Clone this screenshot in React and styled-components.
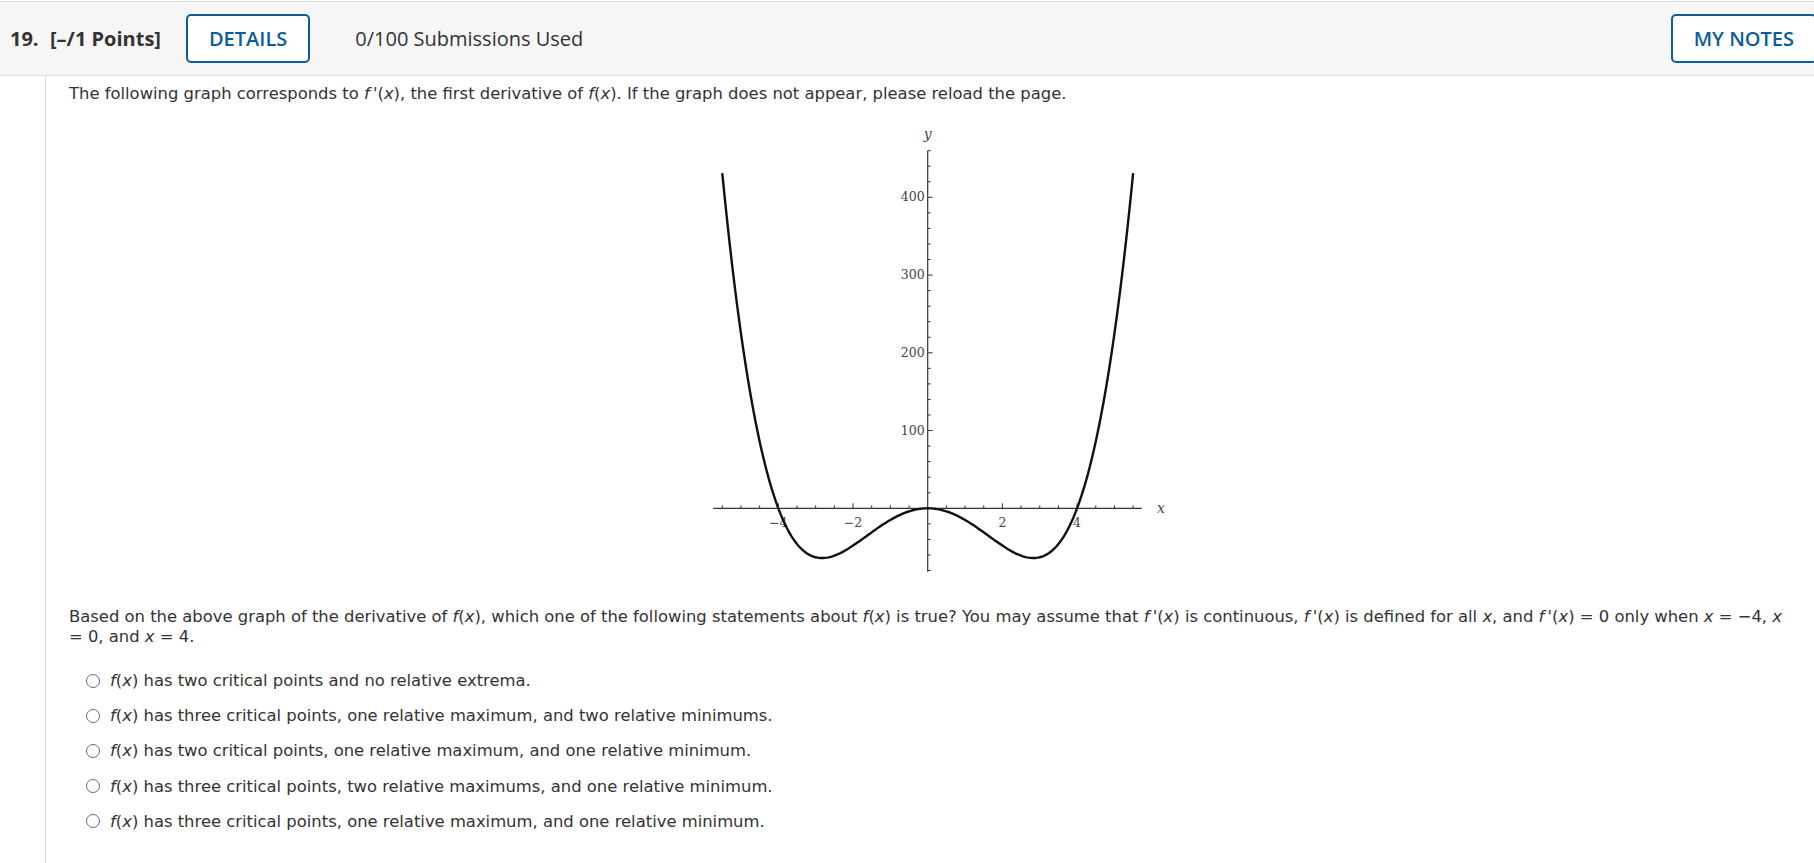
import React from 'react';
import styled, { createGlobalStyle } from 'styled-components';

const GlobalStyle = createGlobalStyle`
  html, body {
    margin: 0;
    padding: 0;
    background: #fff;
  }
  body {
    font-family: "DejaVu Sans", Verdana, sans-serif;
    color: #333;
    overflow: hidden;
  }
`;

const Header = styled.div`
  margin-top: 1px;
  height: 73px;
  display: flex;
  align-items: center;
  padding-left: 10px;
  background: #f6f6f6;
  border-top: 1px solid #dedede;
  border-bottom: 1px solid #dedede;
  font-family: "Open Sans", "Liberation Sans", sans-serif;
  overflow: hidden;
`;

const Number = styled.span`
  font-size: 20px;
  font-weight: 700;
  color: #333;
  width: 40px;
`;

const Points = styled.span`
  font-size: 20px;
  font-weight: 700;
  color: #333;
  margin-right: 25px;
`;

const OutlineButton = styled.button`
  height: 49px;
  padding: 0 21px;
  background: #fff;
  border: 2px solid #0b5e9b;
  border-radius: 5px;
  color: #0b5e9b;
  font-family: "Open Sans", "Liberation Sans", sans-serif;
  font-size: 20px;
  font-weight: 600;
  cursor: pointer;
  margin-right: ${p => (p.$edge ? '-3px' : '0')};
  margin-left: ${p => (p.$edge ? 'auto' : '0')};
`;

const Submissions = styled.span`
  font-size: 20px;
  color: #333;
  margin-left: 45px;
`;

const Body = styled.div`
  margin-left: 45px;
  border-left: 1px solid #dcdcdc;
  padding: 8px 23px 60px 23px;
  min-height: 760px;
  font-size: 16.4px;
  line-height: 20px;
`;

const Para = styled.p`
  margin: 0;
`;

const GraphWrap = styled.div`
  display: flex;
  justify-content: center;
  margin: 6px 0 17px 0;
`;

const Options = styled.div`
  display: flex;
  flex-direction: column;
  gap: 14.2px;
  margin-top: 23px;
  padding-left: 17px;
  line-height: 21px;
`;

const Option = styled.label`
  display: flex;
  align-items: center;
  gap: 10px;
  cursor: pointer;
`;

const Radio = styled.span`
  width: 12px;
  height: 12px;
  border: 1px solid #6b6b6b;
  border-radius: 50%;
  background: #fff;
  flex: none;
`;

const Fx = () => (
  <>
    <i>f</i>(<i>x</i>)
  </>
);

const Fp = () => (
  <>
    <i>f</i>&thinsp;'(<i>x</i>)
  </>
);

const OX = 237.7;
const OY = 398.3;
const SX = 37.35;
const SY = 0.7775;
const px = x => OX + SX * x;
const py = y => OY - SY * y;

function Graph() {
  const pts = [];
  for (let i = 0; i <= 220; i++) {
    const x = -5.5 + i * 0.05;
    const y = x ** 4 - 16 * x ** 2;
    pts.push(`${px(x).toFixed(2)},${py(y).toFixed(2)}`);
  }
  const xTicks = [];
  for (let i = -11; i <= 11; i++) {
    if (i === 0) continue;
    const major = i % 4 === 0;
    xTicks.push(
      <line key={'x' + i} x1={px(i / 2)} x2={px(i / 2)} y1={OY} y2={OY - (major ? 5 : 3)} stroke="#333" strokeWidth="1" />
    );
  }
  const yTicks = [];
  for (let v = -80; v <= 460; v += 20) {
    if (v === 0) continue;
    const major = v % 100 === 0;
    yTicks.push(
      <line key={'y' + v} x1={OX} x2={OX + (major ? 5 : 3)} y1={py(v)} y2={py(v)} stroke="#333" strokeWidth="1" />
    );
  }
  const lbl = { fontFamily: '"DejaVu Serif", "Liberation Serif", serif', fontSize: 12.5, fill: '#444' };
  return (
    <svg width="480" height="480" viewBox="0 0 480 480">
      <line x1="23.3" x2="451.7" y1={OY} y2={OY} stroke="#333" strokeWidth="1.2" />
      <line x1={OX} x2={OX} y1="40.7" y2="461.7" stroke="#333" strokeWidth="1.2" />
      {xTicks}
      {yTicks}
      {[-4, -2, 2, 4].map(v => (
        <text key={v} x={px(v)} y={OY + 19} textAnchor="middle" {...lbl}>
          {v < 0 ? '\u2212' + -v : v}
        </text>
      ))}
      {[100, 200, 300, 400].map(v => (
        <text key={v} x={OX - 3} y={py(v) + 4} textAnchor="end" {...lbl}>
          {v}
        </text>
      ))}
      <text x="467" y={OY + 5} {...lbl} fontSize="14" fontStyle="italic">x</text>
      <text x={OX - 4} y="29" {...lbl} fontSize="14" fontStyle="italic">y</text>
      <polyline points={pts.join(' ')} fill="none" stroke="#111" strokeWidth="2.4" strokeLinejoin="round" />
    </svg>
  );
}

const choices = [
  'has two critical points and no relative extrema.',
  'has three critical points, one relative maximum, and two relative minimums.',
  'has two critical points, one relative maximum, and one relative minimum.',
  'has three critical points, two relative maximums, and one relative minimum.',
  'has three critical points, one relative maximum, and one relative minimum.',
];

export default function App() {
  return (
    <>
      <GlobalStyle />
      <Header>
        <Number>19.</Number>
        <Points>[–/1 Points]</Points>
        <OutlineButton>DETAILS</OutlineButton>
        <Submissions>0/100 Submissions Used</Submissions>
        <OutlineButton $edge>MY NOTES</OutlineButton>
      </Header>
      <Body>
        <Para>
          The following graph corresponds to <Fp />, the first derivative of <Fx />. If the graph does not appear, please reload the page.
        </Para>
        <GraphWrap>
          <Graph />
        </GraphWrap>
        <Para>
          Based on the above graph of the derivative of <Fx />, which one of the following statements about <Fx /> is true? You may assume that <Fp /> is continuous, <Fp /> is defined for all <i>x</i>, and <Fp /> = 0 only when <i>x</i> = −4, <i>x</i> = 0, and <i>x</i> = 4.
        </Para>
        <Options>
          {choices.map((c, i) => (
            <Option key={i}>
              <Radio />
              <span>
                <Fx /> {c}
              </span>
            </Option>
          ))}
        </Options>
      </Body>
    </>
  );
}
